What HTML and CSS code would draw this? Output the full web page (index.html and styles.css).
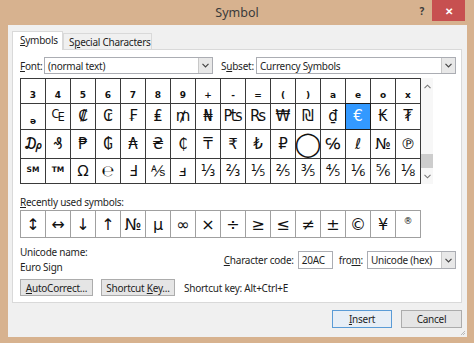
FILE: index.html
```html
<!DOCTYPE html>
<html lang="en">
<head>
    <meta charset="UTF-8">
    <title>Symbol</title>
    <link rel="stylesheet" href="styles.css">
</head>
<body>
    <div class="window">
        <div class="titlebar">
            <div></div>
            <div class="title">Symbol</div>
            <div class="controls">
                <span class="help">?</span>
                <span class="close">&#x2715;</span>
            </div>
        </div>

        <div class="client">
            <div class="tabs">
                <div class="tab active"><u>S</u>ymbols</div>
                <div class="tab">S<u>p</u>ecial Characters</div>
            </div>

            <div class="panel">
                <div class="font-row">
                    <span class="font-label"><u>F</u>ont:</span>
                    <div class="select font-select">
                        <span class="select-text">(normal text)</span>
                        <span class="drop"><svg width="7" height="5" viewBox="0 0 7 5"><path d="M0.5 0.8 L3.5 3.8 L6.5 0.8" fill="none" stroke="#444" stroke-width="1.2"/></svg></span>
                    </div>
                    <span class="subset-label">S<u>u</u>bset:</span>
                    <div class="select subset-select">
                        <span class="select-text">Currency Symbols</span>
                        <span class="drop"><svg width="7" height="5" viewBox="0 0 7 5"><path d="M0.5 0.8 L3.5 3.8 L6.5 0.8" fill="none" stroke="#444" stroke-width="1.2"/></svg></span>
                    </div>
                </div>

                <div class="grid-wrap">
                    <div class="symbol-grid">
                        <div class="cell sub">3</div>
                        <div class="cell sub">4</div>
                        <div class="cell sub">5</div>
                        <div class="cell sub">6</div>
                        <div class="cell sub">7</div>
                        <div class="cell sub">8</div>
                        <div class="cell sub">9</div>
                        <div class="cell sub">+</div>
                        <div class="cell sub">-</div>
                        <div class="cell sub">=</div>
                        <div class="cell sub">(</div>
                        <div class="cell sub">)</div>
                        <div class="cell sub">a</div>
                        <div class="cell sub">e</div>
                        <div class="cell sub">o</div>
                        <div class="cell sub">x</div>

                        <div class="cell sub">&#x0259;</div>
                        <div class="cell">&#x20A0;</div>
                        <div class="cell">&#x20A1;</div>
                        <div class="cell">&#x20A2;</div>
                        <div class="cell">&#x20A3;</div>
                        <div class="cell">&#x20A4;</div>
                        <div class="cell">&#x20A5;</div>
                        <div class="cell">&#x20A6;</div>
                        <div class="cell">&#x20A7;</div>
                        <div class="cell">&#x20A8;</div>
                        <div class="cell">&#x20A9;</div>
                        <div class="cell">&#x20AA;</div>
                        <div class="cell">&#x20AB;</div>
                        <div class="cell selected">&#x20AC;</div>
                        <div class="cell">&#x20AD;</div>
                        <div class="cell">&#x20AE;</div>

                        <div class="cell">&#x20AF;</div>
                        <div class="cell">&#x20B0;</div>
                        <div class="cell">&#x20B1;</div>
                        <div class="cell">&#x20B2;</div>
                        <div class="cell">&#x20B3;</div>
                        <div class="cell">&#x20B4;</div>
                        <div class="cell">&#x20B5;</div>
                        <div class="cell">&#x20B8;</div>
                        <div class="cell">&#x20B9;</div>
                        <div class="cell">&#x20BA;</div>
                        <div class="cell">&#x20BD;</div>
                        <div class="cell big">&#x25EF;</div>
                        <div class="cell">&#x2105;</div>
                        <div class="cell">&#x2113;</div>
                        <div class="cell">&#x2116;</div>
                        <div class="cell">&#x2117;</div>

                        <div class="cell tiny">SM</div>
                        <div class="cell tiny">TM</div>
                        <div class="cell">&#x2126;</div>
                        <div class="cell">&#x212E;</div>
                        <div class="cell">&#x2132;</div>
                        <div class="cell">&#x214D;</div>
                        <div class="cell">&#x214E;</div>
                        <div class="cell">&#x2153;</div>
                        <div class="cell">&#x2154;</div>
                        <div class="cell">&#x2155;</div>
                        <div class="cell">&#x2156;</div>
                        <div class="cell">&#x2157;</div>
                        <div class="cell">&#x2158;</div>
                        <div class="cell">&#x2159;</div>
                        <div class="cell">&#x215A;</div>
                        <div class="cell">&#x215B;</div>
                    </div>
                    <div class="scrollbar">
                        <div class="arrow"><svg width="7" height="5" viewBox="0 0 7 5"><path d="M0.5 4.2 L3.5 1.2 L6.5 4.2" fill="none" stroke="#777" stroke-width="1.1"/></svg></div>
                        <div class="track"><div class="thumb"></div></div>
                        <div class="arrow"><svg width="7" height="5" viewBox="0 0 7 5"><path d="M0.5 0.8 L3.5 3.8 L6.5 0.8" fill="none" stroke="#777" stroke-width="1.1"/></svg></div>
                    </div>
                </div>

                <div class="recent-label"><u>R</u>ecently used symbols:</div>
                <div class="recent-grid">
                    <div class="cell">&#x2195;</div>
                    <div class="cell">&#x2194;</div>
                    <div class="cell">&#x2193;</div>
                    <div class="cell">&#x2191;</div>
                    <div class="cell">&#x2116;</div>
                    <div class="cell">&#x00B5;</div>
                    <div class="cell">&#x221E;</div>
                    <div class="cell">&#x00D7;</div>
                    <div class="cell">&#x00F7;</div>
                    <div class="cell">&#x2265;</div>
                    <div class="cell">&#x2264;</div>
                    <div class="cell">&#x2260;</div>
                    <div class="cell">&#x00B1;</div>
                    <div class="cell">&#x00A9;</div>
                    <div class="cell">&#x00A5;</div>
                    <div class="cell reg">&#x00AE;</div>
                </div>

                <div class="info-row">
                    <div class="name-col">
                        <div>Unicode name:</div>
                        <div>Euro Sign</div>
                    </div>
                    <div class="code-col">
                        <span><u>C</u>haracter code:</span>
                        <div class="code-box">20AC</div>
                        <span class="from-label">fro<u>m</u>:</span>
                        <div class="select from-select">
                            <span class="select-text">Unicode (hex)</span>
                            <span class="drop"><svg width="7" height="5" viewBox="0 0 7 5"><path d="M0.5 0.8 L3.5 3.8 L6.5 0.8" fill="none" stroke="#444" stroke-width="1.2"/></svg></span>
                        </div>
                    </div>
                </div>

                <div class="button-row">
                    <div class="btn autocorrect"><span><u>A</u>utoCorrect...</span></div>
                    <div class="btn shortcut-btn"><span>Shortcut <u>K</u>ey...</span></div>
                    <span class="shortcut-text">Shortcut key: Alt+Ctrl+E</span>
                </div>
            </div>

            <div class="dialog-buttons">
                <div class="btn default"><span><u>I</u>nsert</span></div>
                <div class="btn cancel"><span>Cancel</span></div>
            </div>

            <svg class="grip" width="6" height="6" viewBox="0 0 6 6">
                <path d="M5 1 L1 5 M5 3 L3 5" stroke="#b8b8b8" stroke-width="1"/>
            </svg>
        </div>
    </div>
</body>
</html>
```

FILE: styles.css
```css
body {
    margin: 0;
    background-color: #d7b28f;
    font-family: 'Noto Sans', sans-serif;
    font-size: 10px;
    letter-spacing: -0.25px;
    color: #1e1e1e;
    overflow: hidden;
}

u {
    text-decoration: underline;
    text-underline-offset: 1px;
}

.window {
    width: 474px;
    height: 343px;
    background-color: #d7b28f;
    display: flex;
    flex-direction: column;
}

.titlebar {
    height: 25px;
    display: grid;
    grid-template-columns: 1fr auto 1fr;
    align-items: start;
}

.title {
    font-size: 12.5px;
    letter-spacing: 0;
    color: #3a3a3a;
    line-height: 25px;
}

.controls {
    display: flex;
    justify-content: flex-end;
    align-items: center;
    padding-right: 9px;
}

.help {
    font-weight: bold;
    font-size: 10px;
    color: #3a3a3a;
    margin-right: 8px;
    line-height: 20px;
}

.close {
    width: 33px;
    height: 21px;
    background-color: #c75050;
    color: #fff;
    font-size: 10px;
    font-weight: bold;
    display: flex;
    align-items: center;
    justify-content: center;
}

.client {
    position: relative;
    margin: 0 7px 6px 8px;
    flex: 1;
    background-color: #f0f0f0;
    padding: 6px 5px 0 4px;
}

.tabs {
    display: flex;
    align-items: flex-end;
    height: 18px;
}

.tab {
    height: 16px;
    line-height: 16px;
    border: 1px solid #d9d9d9;
    border-bottom: none;
    background-color: #f0f0f0;
    padding-left: 5px;
    width: 89px;
    box-sizing: border-box;
    white-space: nowrap;
}

.tab.active {
    height: 19px;
    width: 51px;
    padding-left: 7px;
    background-color: #fff;
    margin-bottom: -1px;
    position: relative;
    z-index: 1;
}

.panel {
    background-color: #fff;
    border: 1px solid #d9d9d9;
    padding: 7px 5px 6px 7px;
}

.font-row {
    display: flex;
    align-items: center;
    height: 17px;
    white-space: nowrap;
}

.font-label {
    width: 24px;
}

.subset-label {
    width: 35px;
    margin-left: 8px;
}

.select {
    height: 17px;
    box-sizing: border-box;
    border: 1px solid #abadb3;
    background-color: #fff;
    display: flex;
    align-items: center;
}

.select-text {
    flex: 1;
    padding-left: 3px;
    white-space: nowrap;
}

.drop {
    width: 14px;
    height: 100%;
    box-sizing: border-box;
    border-left: 1px solid #c8c8c8;
    background-color: #e8e8e8;
    display: flex;
    align-items: center;
    justify-content: center;
}

.font-select {
    width: 169px;
}

.subset-select {
    flex: 1;
}

.grid-wrap {
    display: flex;
    margin-top: 4px;
    height: 106px;
}

.symbol-grid {
    width: 401px;
    box-sizing: border-box;
    display: grid;
    grid-template-columns: repeat(16, 24px);
    grid-template-rows: repeat(4, 1fr);
    gap: 1px;
    padding: 1px;
    background-color: #3a3a3a;
}

.cell {
    background-color: #fff;
    display: flex;
    align-items: center;
    justify-content: center;
    font-family: 'DejaVu Sans', sans-serif;
    font-size: 15px;
    letter-spacing: 0;
    color: #111;
}

.cell.sub {
    font-size: 9px;
    font-weight: bold;
    align-items: flex-end;
    padding-bottom: 3px;
}

.cell.tiny {
    font-size: 7.5px;
    font-weight: bold;
    align-items: flex-start;
    padding-top: 6px;
}

.cell.big {
    font-size: 24px;
}

.cell.selected {
    background-color: #3399ff;
    color: #fff;
    outline: 1px solid #1a1a1a;
}

.scrollbar {
    width: 12px;
    display: flex;
    flex-direction: column;
    background-color: #f7f7f7;
}

.arrow {
    height: 16px;
    display: flex;
    align-items: center;
    justify-content: center;
}

.track {
    flex: 1;
    display: flex;
    flex-direction: column;
    justify-content: flex-end;
}

.thumb {
    height: 14px;
    background-color: #cdcdcd;
}

.recent-label {
    margin-top: 11px;
    line-height: 15px;
}

.recent-grid {
    width: 401px;
    height: 28px;
    box-sizing: border-box;
    display: grid;
    grid-template-columns: repeat(16, 24px);
    gap: 1px;
    padding: 1px;
    background-color: #a0a0a0;
}

.recent-grid .cell {
    font-size: 16px;
}

.recent-grid .cell.reg {
    font-size: 9px;
    align-items: flex-start;
    padding-top: 5px;
}

.info-row {
    display: flex;
    align-items: center;
    margin-top: 7px;
    line-height: 15px;
}

.code-col {
    margin-left: auto;
    display: flex;
    align-items: center;
}

.code-box {
    width: 35px;
    height: 18px;
    box-sizing: border-box;
    border: 1px solid #abadb3;
    background-color: #fff;
    line-height: 16px;
    padding-left: 3px;
    margin-left: 4px;
}

.from-label {
    margin-left: 6px;
}

.from-select {
    width: 89px;
    height: 18px;
    margin-left: 4px;
}

.button-row {
    display: flex;
    align-items: center;
    margin-top: 4px;
    height: 17px;
    white-space: nowrap;
}

.btn {
    height: 17px;
    box-sizing: border-box;
    border: 1px solid #acacac;
    background-color: #e5e5e5;
    display: flex;
    align-items: center;
    justify-content: center;
    white-space: nowrap;
}

.autocorrect {
    width: 73px;
}

.shortcut-btn {
    width: 74px;
    margin-left: 8px;
}

.shortcut-text {
    margin-left: 9px;
}

.dialog-buttons {
    display: flex;
    justify-content: flex-end;
    margin-top: 7px;
}

.dialog-buttons .btn {
    height: 18px;
}

.btn.default {
    width: 60px;
    border-color: #5a9bd6;
    background-color: #e7eef6;
}

.btn.cancel {
    width: 61px;
    margin-left: 9px;
}

.grip {
    position: absolute;
    right: 1px;
    bottom: 1px;
}
```
